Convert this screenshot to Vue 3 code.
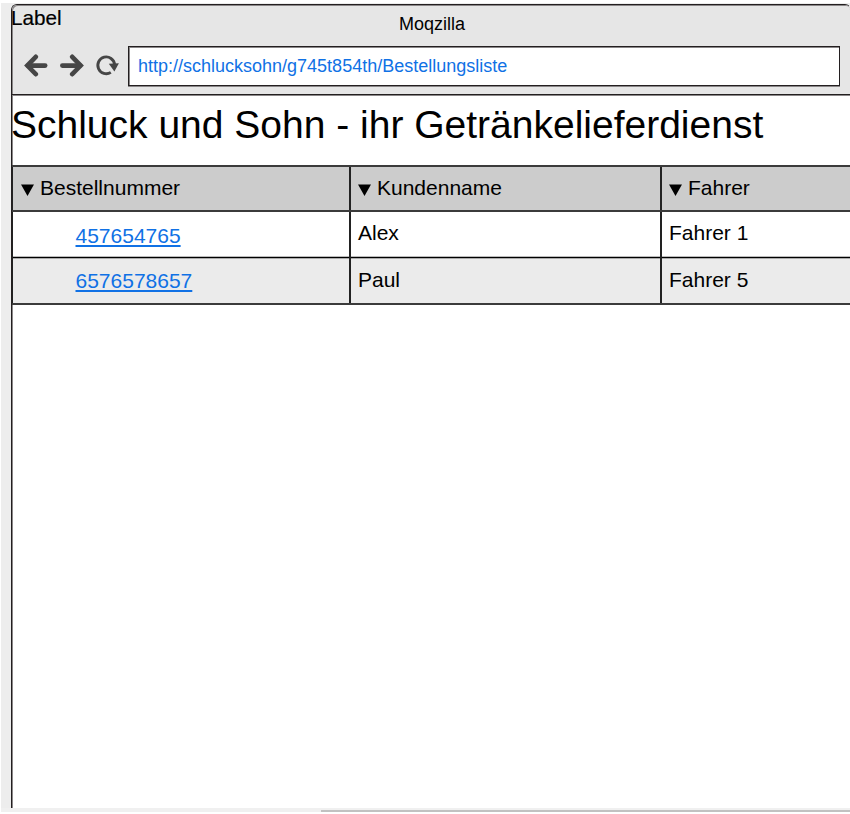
<script setup>
const columns = ['Bestellnummer', 'Kundenname', 'Fahrer']
const orders = [
  { id: '457654765', customer: 'Alex', driver: 'Fahrer 1' },
  { id: '6576578657', customer: 'Paul', driver: 'Fahrer 5' },
]
</script>

<template>
  <div class="canvas">
    <div class="workspace">
      <div class="browser">
        <header class="chrome">
          <div class="titlebar">
            <span class="label">Label</span>
            <span class="title">Moqzilla</span>
          </div>
          <div class="toolbar">
            <svg class="nav" viewBox="0 0 96 24" width="96" height="24" fill="none" stroke="#464646" stroke-width="4.6" stroke-linecap="round">
              <path d="M4 12.600H21.200" />
              <path d="M11.800 3.800L3.300 12.600L11.800 21.200" />
              <path d="M38.300 12.600H56" />
              <path d="M48.200 3.800L56.700 12.600L48.200 21.200" />
              <path d="M86.800 19.400A8.400 8.400 0 1 1 90.600 11.500" stroke-width="2.900" stroke-linecap="butt" />
              <path d="M84.800 10.700L94.900 10.200L90.400 18.600Z" fill="#464646" stroke="none" />
            </svg>
            <div class="address">http://schlucksohn/g745t854th/Bestellungsliste</div>
          </div>
        </header>
        <main class="page">
          <h1>Schluck und Sohn - ihr Getränkelieferdienst</h1>
          <div class="table">
            <div class="row head">
              <div v-for="c in columns" :key="c" class="cell">
                <svg class="sort" viewBox="0 0 13 12" width="13" height="12"><path d="M0 .5H13L6.500 12Z" /></svg>
                <span>{{ c }}</span>
              </div>
            </div>
            <div v-for="o in orders" :key="o.id" class="row">
              <div class="cell order"><a href="#">{{ o.id }}</a></div>
              <div class="cell">{{ o.customer }}</div>
              <div class="cell">{{ o.driver }}</div>
            </div>
          </div>
        </main>
      </div>
    </div>
    <div class="scroll"><div class="thumb"></div></div>
  </div>
</template>

<style>
body {
  background: #fff;
  overflow: hidden;
}
</style>

<style scoped>
.canvas {
  box-sizing: border-box;
  width: 850px;
  height: 814px;
  padding: 3px 0 2px 1px;
  overflow: hidden;
  background: #fff;
  color: #000;
  font-family: "Liberation Sans", Arial, sans-serif;
}
.workspace {
  box-sizing: border-box;
  height: 805px;
  padding: 1px 0 0 10px;
  background: #ededed;
  overflow: hidden;
}
.browser {
  box-sizing: border-box;
  width: 840px;
  height: 830px;
  border: 1px solid #231f20;
  border-right-color: #e6e6e6;
  border-radius: 6px 6px 0 0;
  background: #fff;
  box-shadow: inset 1px 1px 0 #8a8788;
}
.chrome {
  box-sizing: border-box;
  height: 90px;
  border-radius: 5px 5px 0 0;
  border-bottom: 1px solid #231f20;
  background: #e6e6e6;
  box-shadow: inset 1px 1px 0 #8a8788, 0 1px 0 #8a8788;
}
.titlebar {
  display: grid;
  grid-template-columns: 1fr auto 1fr;
  height: 41px;
}
.label {
  font-size: 20.700px;
  line-height: 26px;
  margin-left: -1px;
  -webkit-text-stroke: 0.2px #000;
}
.title {
  font-size: 18px;
  line-height: 20px;
  padding: 9px 0 0 2px;
}
.toolbar {
  display: flex;
  height: 41px;
  padding-left: 12px;
}
.nav {
  flex: none;
  margin-top: 7px;
}
.address {
  box-sizing: border-box;
  width: 712px;
  height: 40px;
  margin-left: 8px;
  padding-left: 9px;
  border: 1px solid #231f20;
  box-shadow: inset 0 1px 0 #8a8788, inset 1px 0 0 #8a8788, 0 1px 0 #8a8788;
  background: #fff;
  color: #1071e5;
  font-size: 18px;
  line-height: 38px;
  white-space: nowrap;
}
.page {
  padding-top: 1px;
}
h1 {
  height: 69px;
  margin: 0 0 0 -1px;
  font-size: 39px;
  font-weight: 400;
  line-height: 58px;
  white-space: nowrap;
}
.table {
  width: 900px;
  font-size: 21px;
  border-bottom: 2px solid #3b3b3b;
}
.row {
  display: grid;
  grid-template-columns: 337px 311px 252px;
  height: 46px;
}
.row.head {
  box-sizing: border-box;
  height: 47px;
  border-top: 2px solid #3b3b3b;
  border-bottom: 2px solid #3b3b3b;
  background: #ccc;
}
.row:nth-child(2) {
  height: 45px;
}
.row:last-child {
  box-sizing: border-box;
  border-top: 1px solid #000;
  background: #ebebeb;
  box-shadow: inset 0 1px 0 #aaa, 0 -1px 0 #bbb;
}
.cell {
  box-sizing: border-box;
  padding-left: 7px;
  border-left: 2px solid #222;
  line-height: 42px;
  white-space: nowrap;
}
.cell:first-child {
  border-left-width: 1px;
  padding-left: 8px;
}
.head .cell {
  display: flex;
  gap: 6px;
}
.row:last-child .cell {
  line-height: 44px;
}
.sort {
  flex: none;
  margin-top: 17px;
}
.row .cell.order {
  padding-left: 62.500px;
  line-height: 47px;
}
.row:last-child .cell.order {
  line-height: 45px;
}
a {
  color: #1071e5;
  text-underline-offset: 2px;
  text-decoration-thickness: 1.500px;
}
.scroll {
  height: 4px;
  background: #f0f0f0;
}
.thumb {
  height: 4px;
  margin-left: 320px;
  border-top: 2px solid #f0f0f0;
  box-sizing: border-box;
  background: #c1c1c1;
}
</style>
